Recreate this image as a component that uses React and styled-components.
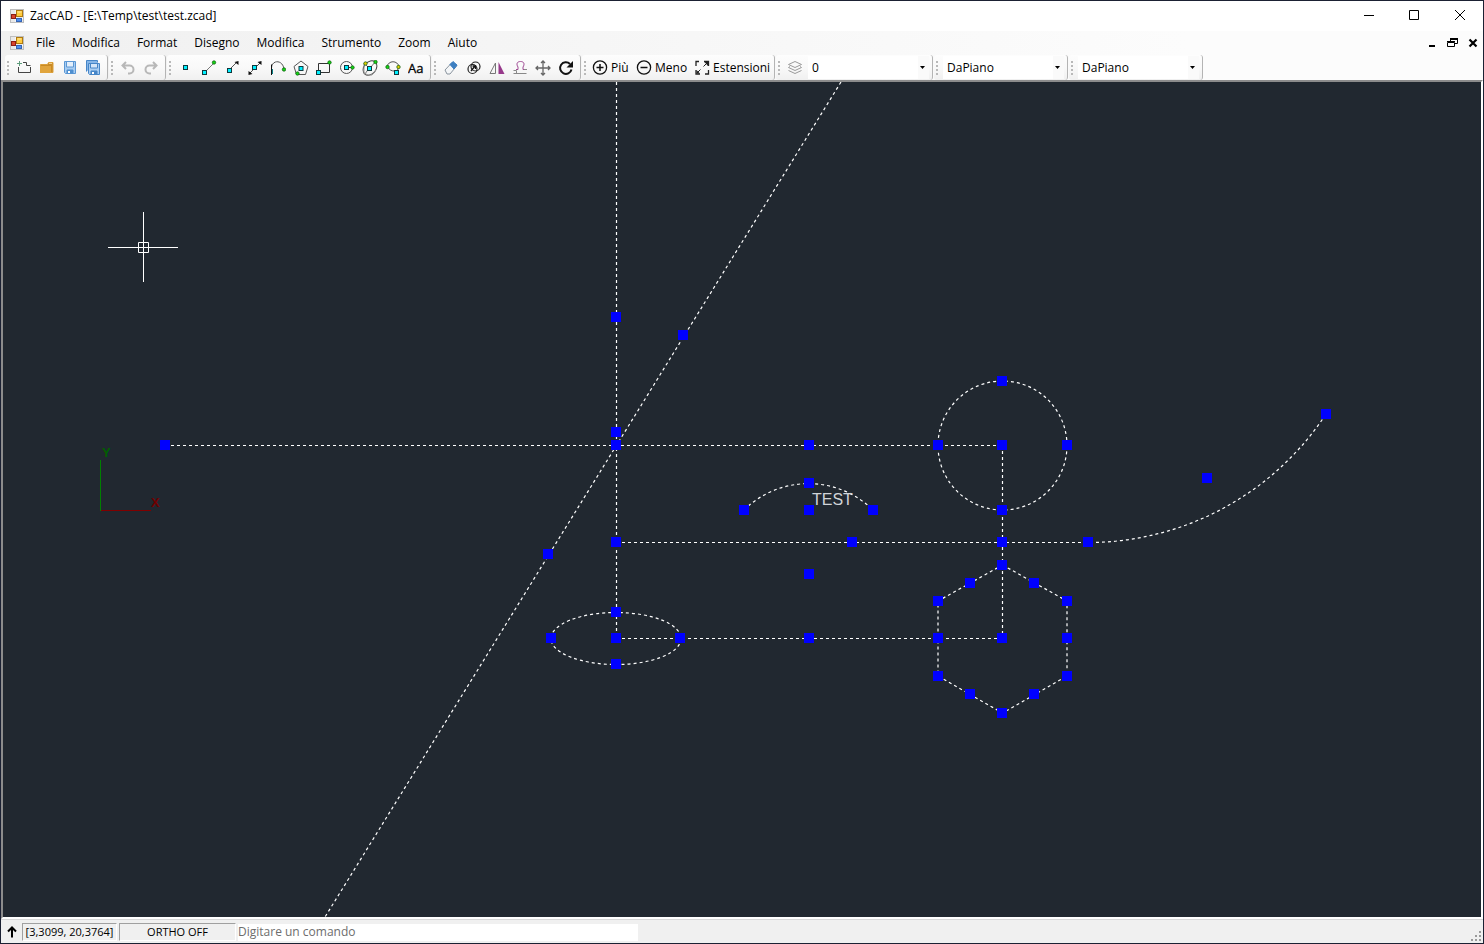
import React from "react";
import styled, { createGlobalStyle } from "styled-components";

const GlobalStyle = createGlobalStyle`
  *, *::before, *::after { box-sizing: border-box; }
  body { margin: 0; background: #1b2133; }
  body, button, input, select {
    font-family: "Open Sans", "Noto Sans", sans-serif;
    font-size: 12px;
    line-height: 16px;
    color: #000;
  }
`;

const Window = styled.div`
  display: flex;
  flex-direction: column;
  height: 100vh;
  min-height: 320px;
  padding: 1px;
  background: #1b2133;
`;

const TitleBar = styled.header`
  display: flex;
  align-items: center;
  flex: none;
  height: 30px;
  padding-left: 9px;
  background: #fff;
`;

const Title = styled.h1`
  flex: 1;
  margin: 0 0 0 6px;
  font-size: 12px;
  font-weight: 400;
  line-height: 16px;
`;

const WindowButton = styled.button`
  display: flex;
  align-items: center;
  justify-content: center;
  width: ${(p) => (p.$small ? 20 : 46)}px;
  height: ${(p) => (p.$small ? 20 : 29)}px;
  padding: 0;
  border: 0;
  background: none;
`;

const ManagedBars = styled.div`
  flex: none;
  background: linear-gradient(90deg, #f0f0f0, #fcfcfc 80%);
`;

const MenuBar = styled.nav`
  display: flex;
  align-items: center;
  height: 24px;
  padding-left: 9px;
`;

const MenuList = styled.div`
  display: flex;
  flex: 1;
  margin-left: 4px;
`;

const MenuButton = styled.button`
  padding: 0 8px;
  border: 0;
  background: none;
  white-space: nowrap;
  & + & { padding-left: 9px; }
`;

const ToolRow = styled.div`
  display: flex;
  height: 25px;
  padding-left: 4px;
`;

const Strip = styled.div`
  display: flex;
  align-items: center;
  flex: none;
  height: 25px;
  padding: 0 2px;
  margin-right: 1px;
  border-right: 1px solid #b4b4b4;
  border-radius: 3px;
  background: linear-gradient(#fdfdfd, #f9f9f9 50%, #f0f0f0);
`;

const Grip = styled.span`
  width: 2px;
  height: 14px;
  margin-right: 4px;
  background: repeating-linear-gradient(#b9b9b9 0 2px, transparent 2px 4px);
`;

const ToolButton = styled.button`
  display: flex;
  align-items: center;
  gap: 3px;
  flex: none;
  width: ${(p) => p.$width || 23}px;
  height: 22px;
  padding: 0 0 0 ${(p) => (p.$width ? 2 : 3)}px;
  border: 0;
  background: none;
  white-space: nowrap;
`;

const Combo = styled.label`
  position: relative;
  display: block;
  width: ${(p) => p.$width}px;
  height: 23px;
  margin: 0 1px;
`;

const ComboSelect = styled.select`
  appearance: none;
  display: block;
  width: 100%;
  height: 100%;
  padding: 0 12px 0 4px;
  border: 0;
  border-radius: 0;
  background: linear-gradient(90deg, transparent calc(100% - 11px), #fafafa 0), #fff;
`;

const ComboArrow = styled.svg`
  position: absolute;
  right: 4px;
  top: 10px;
  pointer-events: none;
`;

const Workspace = styled.main`
  display: flex;
  flex: 1;
  min-height: 0;
  border: 2px solid;
  border-color: #8c8c8c #fff #fff #8c8c8c;
  background: #212830;
`;

const Drawing = styled.svg`
  flex: 1;
  width: 100%;
  height: 100%;
`;

const Wire = styled.g`
  fill: none;
  stroke: #fff;
  stroke-dasharray: 3 3;
`;

const Label = styled.text`
  font-family: "Liberation Sans", sans-serif;
  font-size: ${(p) => p.$size}px;
  font-weight: ${(p) => (p.$bold ? 700 : 400)};
`;

const StatusBar = styled.footer`
  display: flex;
  align-items: center;
  flex: none;
  height: 24px;
  padding: 1px 2px 0 6px;
  border-top: 1px solid #d7d7d7;
  background: #f0f0f0;
`;

const Panel = styled.output`
  width: ${(p) => p.$width}px;
  height: 18px;
  margin-right: 2px;
  border: 1px solid;
  border-color: #a0a0a0 #fff #fff #a0a0a0;
  font-size: 11px;
  text-align: center;
  white-space: nowrap;
`;

const PanelIcon = styled.span`
  display: flex;
  width: 15px;
`;

const CommandInput = styled.input`
  width: 400px;
  height: 17px;
  padding: 0 0 2px;
  border: 0;
  background: #fff;
  &::placeholder { color: #6d6d6d; opacity: 1; }
`;

const SizeGrip = styled.svg`
  align-self: flex-end;
  margin: 0 0 2px auto;
`;

const Icon = ({ children, size = 16 }) => (
  <svg width={size} height={size} viewBox={`0 0 ${size} ${size}`} fill="none" stroke="#333" aria-hidden="true">
    {children}
  </svg>
);

const Node = ({ x, y }) => <rect x={x} y={y} width="4" height="4" fill="#00f0ff" stroke="#10383c" />;
const Dot = ({ x, y, fill = "#12d812" }) => <circle cx={x} cy={y} r="1.7" fill={fill} stroke="#146414" strokeWidth="0.8" />;

const FormIcon = () => (
  <Icon size={14}>
    <rect x="0.5" y="0.5" width="13" height="13" fill="#e9e9e9" stroke="#bdbdbd" />
    <path d="M6 1v12M1 9.500h12" stroke="#fff" />
    <rect x="1.500" y="5.500" width="4" height="4" fill="#d8432c" stroke="#8c1d14" />
    <rect x="6.500" y="1.500" width="6" height="6" fill="#ffcb3c" stroke="#b07a10" />
    <path d="M7.500 3h4" stroke="#ffeaa6" />
    <rect x="6.500" y="9.500" width="5" height="3" fill="#4c8df0" stroke="#3565b5" />
  </Icon>
);

const icons = {
  nuovo: (
    <>
      <path d="M3.500 1v5M1 3.500h5" stroke="#5f9e7c" />
      <path d="M2.500 7v5.500h12V7M7 2.500h3.500v3h4" stroke="#444" />
    </>
  ),
  apri: (
    <>
      <path d="M1.500 12.500V4.500h7l1-2h4.500v10z" fill="#c98a24" stroke="#dba03a" />
      <path d="M1 6h11v7H1z" fill="#e0a43c" stroke="none" />
      <path d="M10 3.500h3" stroke="#f3d08a" />
    </>
  ),
  salva: (
    <>
      <path d="M2.500 1.500h11v12h-10l-1-1z" fill="#a8cdf2" stroke="#5b97d4" />
      <path d="M4.500 2v5h7V2" fill="#e4effb" stroke="#5b97d4" />
      <path d="M5 13v-3h6v3z" fill="#4f8fd0" stroke="#4f8fd0" />
      <path d="M6 11h2v2H6z" fill="#fff" stroke="none" />
    </>
  ),
  salvaTutto: (
    <>
      <path d="M1.500 11.500v-11h11v2" fill="#86b6e8" stroke="#4686c8" />
      <path d="M3.500 3.500h11v11h-10l-1-1z" fill="#a8cdf2" stroke="#4686c8" />
      <path d="M5.500 4v4h7V4" fill="#d4e6f8" stroke="#4686c8" />
      <path d="M6 14v-3h6v3z" fill="#4686c8" stroke="#4686c8" />
      <path d="M7 12h2v2H7z" fill="#fff" stroke="none" />
    </>
  ),
  annulla: <path d="M6 2 2.500 5.500 6 9M2.500 5.500h7a4 4 0 0 1 0 8H8" stroke="#b8b8b8" strokeWidth="2" />,
  ripeti: <path d="m10 2 3.500 3.500L10 9M13.500 5.500h-7a4 4 0 0 0 0 8H8" stroke="#b8b8b8" strokeWidth="2" />,
  punto: <Node x={5.500} y={5.500} />,
  linea: (<><path d="M4 12 13 3" stroke="#777" /><Node x={1.500} y={10.500} /><Dot x={13} y={2.500} /></>),
  raggio: (<><path d="m5 10 7-7" stroke="#555" /><path d="M14.500 1v4l-4-3z" fill="#111" stroke="none" /><Node x={3.500} y={8.500} /></>),
  retta: (<><path d="M3 13 13 3" stroke="#555" /><path d="M14.500 1v4l-4-3zM1.500 15v-4l4 3z" fill="#111" stroke="none" /><Node x={5.500} y={5.500} /></>),
  polilinea: (<><path d="M1.500 8c0-8 11-9 12.500 1" stroke="#555" /><path d="M1.500 4.500V15" stroke="#111" /><path d="M2.500 9v5" stroke="#087e84" /><Dot x={14} y={9.500} /></>),
  poligono: (<><path d="m8 1 7 5.500-2.500 8h-9L1 6.500z" stroke="#555" /><Node x={6} y={6.500} /><Dot x={4.500} y={13.500} /></>),
  rettangolo: (<><path d="M2.500 13V3.500h11v9H3" stroke="#333" /><Node x={0.500} y={10.500} /><Dot x={13.500} y={2.500} /></>),
  cerchio: (<><circle cx="7.500" cy="7.500" r="6" stroke="#555" /><path d="M8 7.500h6" /><Node x={5.500} y={5.500} /><Dot x={13.500} y={7.500} /></>),
  ellisse: (<><ellipse cx="8" cy="8" rx="6" ry="8" transform="rotate(40 8 8)" stroke="#444" /><path d="m3 4 4 4M7 8l-4 6M9 7l4-5" stroke="#777" /><path d="M2 3v10l4 2h4l4-5" stroke="#999" /><Node x={5.500} y={6.500} /><Dot x={3.500} y={3.500} fill="#e8d000" /><Dot x={13.500} y={2} /></>),
  arco: (<><path d="M2 7C3 0 13 0 14 7M3 7c1 3 4 4 6 4M14 7l-2 4" stroke="#555" /><Node x={9.500} y={10.500} /><Dot x={2.500} y={7} /><Dot x={13.500} y={7} fill="#e8d000" /></>),
  testo: <text x="0" y="13" fontFamily="Open Sans, sans-serif" fontSize="13" fill="#000" stroke="#000" strokeWidth="0.3">Aa</text>,
  cancella: (<><path d="m2 10 7-7.500 5 3L7 14H4z" fill="#f4f6f8" stroke="#8a949e" /><path d="m7 4.500 3-3 4 3.500-3 4z" fill="#3d7fc1" stroke="#3d7fc1" /></>),
  copia: (<><circle cx="6.500" cy="9" r="4.500" stroke="#222" strokeWidth="1.200" /><circle cx="9.500" cy="6.500" r="4.500" stroke="#222" strokeWidth="1.200" /><path d="m5 11 4-5M6.500 6H9.500v3" stroke="#111" strokeWidth="1.300" /></>),
  specchia: (<><path d="M6.500 3v10.500H1z" stroke="#777" /><path d="M9.500 2v12H15.500z" fill="#96388a" stroke="none" /></>),
  offset: (<><path d="M4 9.500h2V7c-2-3-1-5.500 2.500-5.500S13 4 11 7v2.500h3" stroke="#a04a94" /><path d="M1.500 13.500h13M1.500 10.500h3v3M12 9.500h3" stroke="#888" /></>),
  sposta: <path d="M8 1v14M1 8h14M6 3l2-2 2 2M6 13l2 2 2-2M3 6 1 8l2 2M13 6l2 2-2 2" stroke="#666" strokeWidth="1.300" />,
  ruota: (<><path d="M13.500 9.500A5.800 5.800 0 1 1 12 4" stroke="#111" strokeWidth="2" /><path d="M15 1v6.500H8.500z" fill="#111" stroke="none" /></>),
  piu: (<><circle cx="8" cy="7.500" r="6.600" stroke="#111" strokeWidth="1.300" /><path d="M4.500 7.500h7M8 4v7" stroke="#111" strokeWidth="1.500" /></>),
  meno: (<><circle cx="8" cy="7.500" r="6.600" stroke="#111" strokeWidth="1.300" /><path d="M4.500 7.500h7" stroke="#111" strokeWidth="1.500" /></>),
  estensioni: (<><path d="M2 6V1.500H5M10 1.500h4.500V6M14.500 10v4H11M6 14H2V10" stroke="#222" strokeWidth="1.300" /><path d="m9.500 6.500 3.500-3.500M6.500 9.500 3 13" stroke="#222" /><path d="M10.500 2H14v4zM6 13.500H2.500V10z" fill="#222" stroke="none" /></>),
  livelli: <path d="m8 1.500 6.500 3L8 7.500l-6.500-3zM1.500 7.500l6.500 3 6.500-3M1.500 10.500l6.500 3 6.500-3M1.500 7.500 3 6.500M14.500 7.500 13 6.500" stroke="#9a9a9a" />,
};

const toolStrips = [
  [["nuovo", "Nuovo"], ["apri", "Apri"], ["salva", "Salva"], ["salvaTutto", "Salva tutto"]],
  [["annulla", "Annulla"], ["ripeti", "Ripeti"]],
  [["punto", "Punto"], ["linea", "Linea"], ["raggio", "Raggio"], ["retta", "Retta"], ["polilinea", "Polilinea"], ["poligono", "Poligono"], ["rettangolo", "Rettangolo"], ["cerchio", "Cerchio"], ["ellisse", "Ellisse"], ["arco", "Arco"], ["testo", "Testo"]],
  [["cancella", "Cancella"], ["copia", "Copia"], ["specchia", "Specchia"], ["offset", "Offset"], ["sposta", "Sposta"], ["ruota", "Ruota"]],
];

const zoomTools = [["piu", "Più", 44], ["meno", "Meno", 58], ["estensioni", "Estensioni", 80]];

const menus = ["File", "Modifica", "Format", "Disegno", "Modifica", "Strumento", "Zoom", "Aiuto"];

const handles = [
  [165, 445], [616, 317], [683, 335], [616, 432], [616, 445], [809, 445], [938, 445], [1002, 445],
  [1067, 445], [1002, 381], [1002, 510], [809, 483], [744, 510], [809, 510], [873, 510],
  [616, 542], [852, 542], [1002, 542], [1088, 542], [1207, 478], [1326, 414], [548, 554],
  [809, 574], [616, 612], [551, 638], [616, 638], [680, 638], [616, 664], [809, 638],
  [1002, 565], [970, 583], [1034, 583], [938, 601], [1067, 601], [938, 638], [1002, 638],
  [1067, 638], [938, 676], [1067, 676], [970, 694], [1034, 694], [1002, 713],
];

const ToolCombo = ({ name, value, width }) => (
  <Combo $width={width}>
    <ComboSelect aria-label={name} defaultValue={value}>
      <option>{value}</option>
    </ComboSelect>
    <ComboArrow width="5" height="3" viewBox="0 0 5 3" aria-hidden="true">
      <path d="M0 0h5L2.500 3z" />
    </ComboArrow>
  </Combo>
);

export default function App() {
  return (
    <Window>
      <GlobalStyle />
      <TitleBar>
        <FormIcon />
        <Title>ZacCAD - [E:\Temp\test\test.zcad]</Title>
        <WindowButton aria-label="Riduci a icona">
          <Icon><path d="M4 7.500h10" stroke="#000" /></Icon>
        </WindowButton>
        <WindowButton aria-label="Ingrandisci">
          <Icon><path d="M3.500 2.500h9v9h-9z" stroke="#000" /></Icon>
        </WindowButton>
        <WindowButton aria-label="Chiudi">
          <Icon><path d="m3 2 10 10M13 2 3 12" stroke="#000" /></Icon>
        </WindowButton>
      </TitleBar>

      <ManagedBars>
        <MenuBar>
          <FormIcon />
          <MenuList>
            {menus.map((m, i) => <MenuButton key={i}>{m}</MenuButton>)}
          </MenuList>
          <WindowButton $small aria-label="Riduci documento">
            <Icon><path d="M4 11h6" stroke="#000" strokeWidth="2" /></Icon>
          </WindowButton>
          <WindowButton $small aria-label="Ripristina documento">
            <Icon>
              <path d="M5.500 6V4M12.500 4v4.500H10M5 3.500h8M5 4.500h8" stroke="#000" />
              <path d="M2.500 7.500h7v4h-7zM2 6.500h8" stroke="#000" />
            </Icon>
          </WindowButton>
          <WindowButton $small aria-label="Chiudi documento">
            <Icon><path d="m4.500 4.500 7 7M11.500 4.500l-7 7" stroke="#000" strokeWidth="2.200" /></Icon>
          </WindowButton>
        </MenuBar>

        <ToolRow>
          {toolStrips.map((tools, i) => (
            <Strip key={i} role="toolbar">
              <Grip />
              {tools.map(([id, label]) => (
                <ToolButton key={id} aria-label={label}><Icon>{icons[id]}</Icon></ToolButton>
              ))}
            </Strip>
          ))}
          <Strip role="toolbar">
            <Grip />
            {zoomTools.map(([id, label, width]) => (
              <ToolButton key={id} $width={width}><Icon>{icons[id]}</Icon>{label}</ToolButton>
            ))}
          </Strip>
          <Strip role="toolbar">
            <Grip />
            <ToolButton aria-label="Livelli"><Icon>{icons.livelli}</Icon></ToolButton>
            <ToolCombo name="Livello" value="0" width={121} />
          </Strip>
          <Strip role="toolbar">
            <Grip />
            <ToolCombo name="Colore" value="DaPiano" width={121} />
          </Strip>
          <Strip role="toolbar">
            <Grip />
            <ToolCombo name="Tipo di linea" value="DaPiano" width={121} />
          </Strip>
        </ToolRow>
      </ManagedBars>

      <Workspace>
        <Drawing aria-label="Disegno">
          <g transform="translate(-3 -82)">
            <Wire strokeWidth="1.200">
              <path d="M616.500 82V638M841 82 325 917" />
              <path d="M165 445.500H1002M1002.500 445V638M616 638.500H1002" />
              <path d="M616 542.500H1088A285 285 0 0 0 1326 414" />
              <path d="M744 510A92 92 0 0 1 873 510" />
              <circle cx="1002.500" cy="445.500" r="64.500" />
              <ellipse cx="616" cy="638.500" rx="65" ry="26" />
              <path d="m1002.500 565 64.500 36v75l-64.500 37-64.500-37v-75z" />
            </Wire>
            <Label x="812" y="505" $size={16} fill="#d0d4d8">TEST</Label>
            <g fill="#00f">
              {handles.map(([x, y], i) => (
                <rect key={i} x={x - 5} y={y - 5} width="10" height="10" />
              ))}
            </g>
            <path d="M108 247.500h70M143.500 212v70M138.500 242.500h10v10h-10z" fill="none" stroke="#fff" />
            <path d="M100.500 460v51" stroke="#008000" />
            <path d="M101 510.500h50" stroke="#800000" />
            <Label x="102" y="457" $size={13} $bold fill="#006000">Y</Label>
            <Label x="151" y="507" $size={13} $bold fill="#700000">X</Label>
          </g>
        </Drawing>
      </Workspace>

      <StatusBar>
        <PanelIcon>
          <svg width="10" height="12" viewBox="0 0 10 12" aria-hidden="true">
            <path d="M5 11.500V2M1 5.500 5 1.500l4 4" fill="none" stroke="#000" strokeWidth="2" />
          </svg>
        </PanelIcon>
        <Panel $width={95}>[3,3099, 20,3764]</Panel>
        <Panel $width={117}>ORTHO OFF</Panel>
        <CommandInput aria-label="Comando" placeholder="Digitare un comando" />
        <SizeGrip width="10" height="10" viewBox="0 0 10 10" aria-hidden="true">
          <path d="M8 0h2v2H8zM4 4h2v2H4zM8 4h2v2H8zM0 8h2v2H0zM4 8h2v2H4zM8 8h2v2H8z" fill="#9a9a9a" />
        </SizeGrip>
      </StatusBar>
    </Window>
  );
}
